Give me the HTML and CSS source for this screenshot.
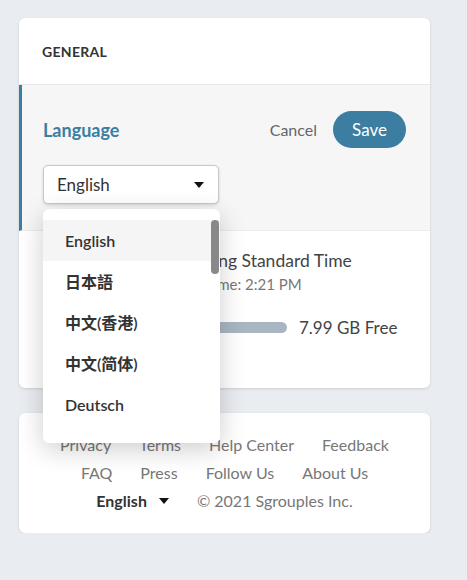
FILE: index.html
```html
<!DOCTYPE html>
<html lang="en">
<head>
  <meta charset="UTF-8">
  <meta name="viewport" content="width=device-width, initial-scale=1.0">
  <title>Settings</title>
  <link rel="stylesheet" href="styles.css">
</head>
<body>
  <div class="page">
    <!-- General settings card -->
    <div class="card">
      <div class="card-head">GENERAL</div>
      <div class="lang-section">
        <div class="lang-row">
          <span class="lang-title">Language</span>
          <div class="actions">
            <button class="cancel-btn">Cancel</button>
            <button class="save-btn">Save</button>
          </div>
        </div>
        <div class="select-box">
          <span>English</span>
          <span class="caret"></span>
        </div>
      </div>
      <div class="info">
        <div class="info-row">
          <span class="info-label">Time Zone</span>
          <div class="info-value">
            <div class="tz-name">Hong Kong Standard Time</div>
            <div class="tz-time">Current Time: 2:21 PM</div>
          </div>
        </div>
        <div class="info-row storage-row">
          <span class="info-label">Storage</span>
          <div class="storage">
            <div class="bar"></div>
            <span class="free">7.99 GB Free</span>
          </div>
        </div>
      </div>
    </div>

    <!-- Footer card -->
    <div class="card footer">
      <div class="links">
        <a>Privacy</a><a>Terms</a><a>Help Center</a><a>Feedback</a>
      </div>
      <div class="links">
        <a>FAQ</a><a>Press</a><a>Follow Us</a><a>About Us</a>
      </div>
      <div class="links">
        <span class="foot-lang">English <span class="caret"></span></span>
        <span>© 2021 Sgrouples Inc.</span>
      </div>
    </div>

    <!-- Open language menu -->
    <ul class="menu">
      <li class="active">English</li>
      <li>日本語</li>
      <li>中文(香港)</li>
      <li>中文(简体)</li>
      <li>Deutsch</li>
      <div class="scroll-thumb"></div>
    </ul>
  </div>
</body>
</html>
```

FILE: styles.css
```css
/* Page */
body {
  margin: 0;
  background-color: #e9ecf0;
  font-family: Lato, "Noto Sans CJK SC", sans-serif;
  color: #444;
}
.page {
  position: relative;
  padding: 18px 0 0 19px;
}
/* Cards */
.card {
  width: 411px;
  background: #fff;
  border-radius: 6px;
  box-shadow: 0 1px 3px rgba(0, 0, 0, 0.12);
  overflow: hidden;
}
.card-head {
  height: 66px;
  display: flex;
  align-items: center;
  padding: 0 23px;
  font-size: 14px;
  font-weight: 700;
  letter-spacing: 0.3px;
  color: #333;
  border-bottom: 1px solid #e8e8e8;
}
/* Language block */
.lang-section {
  background: #f6f6f6;
  border-left: 3px solid #3b7ea1;
  padding: 26px 24px 26px 21px;
  border-bottom: 1px solid #ececec;
}
.lang-row {
  display: flex;
  align-items: center;
  justify-content: space-between;
}
.lang-title {
  font-size: 18px;
  font-weight: 700;
  color: #3b7ea1;
}
.actions {
  display: flex;
  align-items: center;
  gap: 16px;
}
.cancel-btn {
  border: none;
  background: none;
  font-family: inherit;
  font-size: 16px;
  color: #666;
  padding: 0;
}
.save-btn {
  border: none;
  background: #3b7ea1;
  color: #fff;
  font-family: inherit;
  font-size: 17px;
  height: 37px;
  width: 73px;
  border-radius: 19px;
}
.select-box {
  margin-top: 17px;
  width: 176px;
  height: 39px;
  box-sizing: border-box;
  display: flex;
  align-items: center;
  justify-content: space-between;
  padding: 0 14px 0 13px;
  background: #fff;
  border: 1px solid #c8c8c8;
  border-radius: 5px;
  box-shadow: 0 1px 3px rgba(0, 0, 0, 0.15);
  font-size: 17px;
  color: #333;
}
.caret {
  display: inline-block;
  width: 0;
  height: 0;
  border-left: 5px solid transparent;
  border-right: 5px solid transparent;
  border-top: 6px solid #111;
}
/* Info rows */
.info {
  padding: 18px 24px 50px 24px;
}
.info-row {
  display: flex;
}
.info-label {
  width: 108px;
  font-size: 16px;
  color: #444;
}
.tz-name {
  font-size: 17.5px;
  color: #444;
  line-height: 24px;
}
.tz-time {
  font-size: 15px;
  color: #777;
  line-height: 22px;
}
.storage-row {
  margin-top: 22px;
  align-items: center;
}
.storage {
  display: flex;
  align-items: center;
  gap: 12px;
}
.bar {
  width: 136px;
  height: 11px;
  border-radius: 6px;
  background: #a9b6c1;
}
.free {
  font-size: 17px;
  color: #444;
}
/* Footer */
.footer {
  margin-top: 25px;
  padding: 18px 0 18px;
}
.links {
  display: flex;
  justify-content: center;
  gap: 28px;
  font-size: 16px;
  color: #777;
  line-height: 28px;
}
.foot-lang {
  color: #333;
  font-weight: 700;
  display: flex;
  align-items: center;
  gap: 12px;
}
/* Open menu */
.menu {
  position: absolute;
  left: 43px;
  top: 209px;
  width: 177px;
  height: 234px;
  margin: 0;
  padding: 11px 0 0;
  list-style: none;
  background: #fff;
  border-radius: 6px;
  box-shadow: 0 6px 26px rgba(0, 0, 0, 0.2);
  box-sizing: border-box;
}
.menu li {
  height: 41px;
  line-height: 41px;
  padding-left: 22px;
  font-size: 16px;
  font-weight: 600;
  color: #333;
}
.menu li.active {
  background: #f5f5f5;
}
.scroll-thumb {
  position: absolute;
  right: 1px;
  top: 11px;
  width: 8px;
  height: 54px;
  border-radius: 4px;
  background: #888;
}
```
